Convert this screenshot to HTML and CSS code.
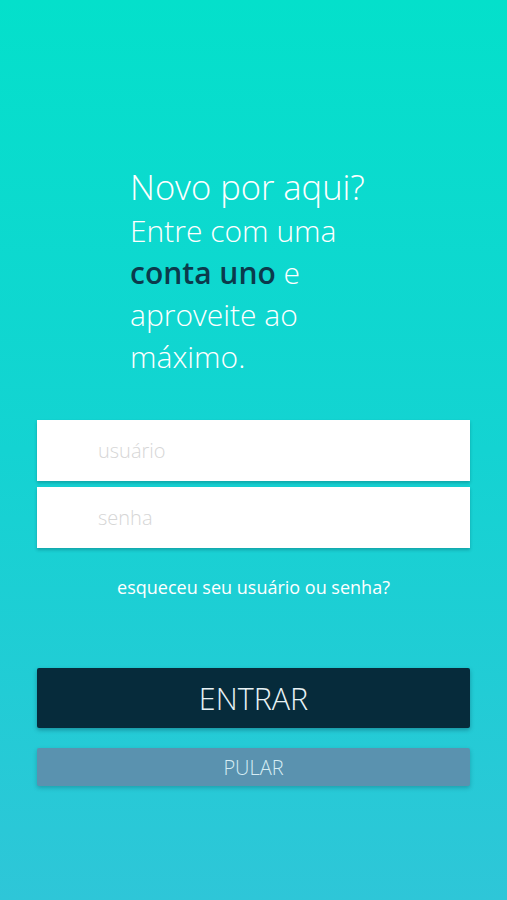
FILE: index.html
```html
<!DOCTYPE html>
<html lang="pt-BR">
<head>
  <meta charset="UTF-8" />
  <meta name="viewport" content="width=device-width, initial-scale=1.0"/>
  <title>Login uno</title>
  <link rel="stylesheet" href="styles.css">
</head>
<body>

  <div class="screen">
    <div class="intro">
      <div class="intro-title">Novo por aqui?</div>
      <div class="intro-text">Entre com uma <b>conta uno</b> e aproveite ao máximo.</div>
    </div>

    <form class="login">
      <input class="field" type="text" placeholder="usuário">
      <input class="field" type="password" placeholder="senha">
      <a class="forgot" href="#">esqueceu seu usuário ou senha?</a>

      <button class="btn-enter" type="button">ENTRAR</button>
      <button class="btn-skip" type="button">PULAR</button>
    </form>
  </div>

</body>
</html>
```

FILE: styles.css
```css
html, body {
  margin: 0;
  height: 100%;
}
body {
  background: linear-gradient(180deg, #04e0cb 0%, #14d3d2 50%, #2ec6d8 100%);
  font-family: 'Open Sans', sans-serif;
  color: #fff;
}
.screen {
  padding: 0 37px;
}
.intro {
  padding: 163px 0 0 93px;
  width: 260px;
  font-weight: 300;
}
.intro-title {
  font-size: 34.5px;
  line-height: 47px;
}
.intro-text {
  font-size: 30px;
  line-height: 42px;
}
.intro-text b {
  font-weight: 600;
  color: #0b3a4c;
}
.login {
  margin-top: 42px;
  display: flex;
  flex-direction: column;
}
.field {
  height: 61px;
  border: none;
  margin: 0 0 6px;
  padding: 0 0 0 61px;
  background: #fff;
  font-family: 'Open Sans', sans-serif;
  font-weight: 300;
  font-size: 20px;
  color: #555;
  box-shadow: 0 2px 3px rgba(0, 60, 70, 0.3);
  outline: none;
}
.field::placeholder {
  color: #d6d6d6;
}
.forgot {
  margin-top: 21px;
  text-align: center;
  color: #fff;
  text-decoration: none;
  font-size: 18px;
}
.btn-enter, .btn-skip {
  border: none;
  border-radius: 2px;
  font-family: 'Open Sans', sans-serif;
  font-weight: 300;
}
.btn-enter {
  margin-top: 69px;
  height: 60px;
  background: #062b3b;
  color: #e8f2f5;
  font-size: 30.5px;
  box-shadow: 0 2px 4px rgba(0, 40, 60, 0.35);
}
.btn-skip {
  margin-top: 20px;
  height: 38px;
  background: #5a92af;
  color: #d6edf4;
  font-size: 20px;
  box-shadow: 0 2px 4px rgba(0, 40, 60, 0.25);
}
```
